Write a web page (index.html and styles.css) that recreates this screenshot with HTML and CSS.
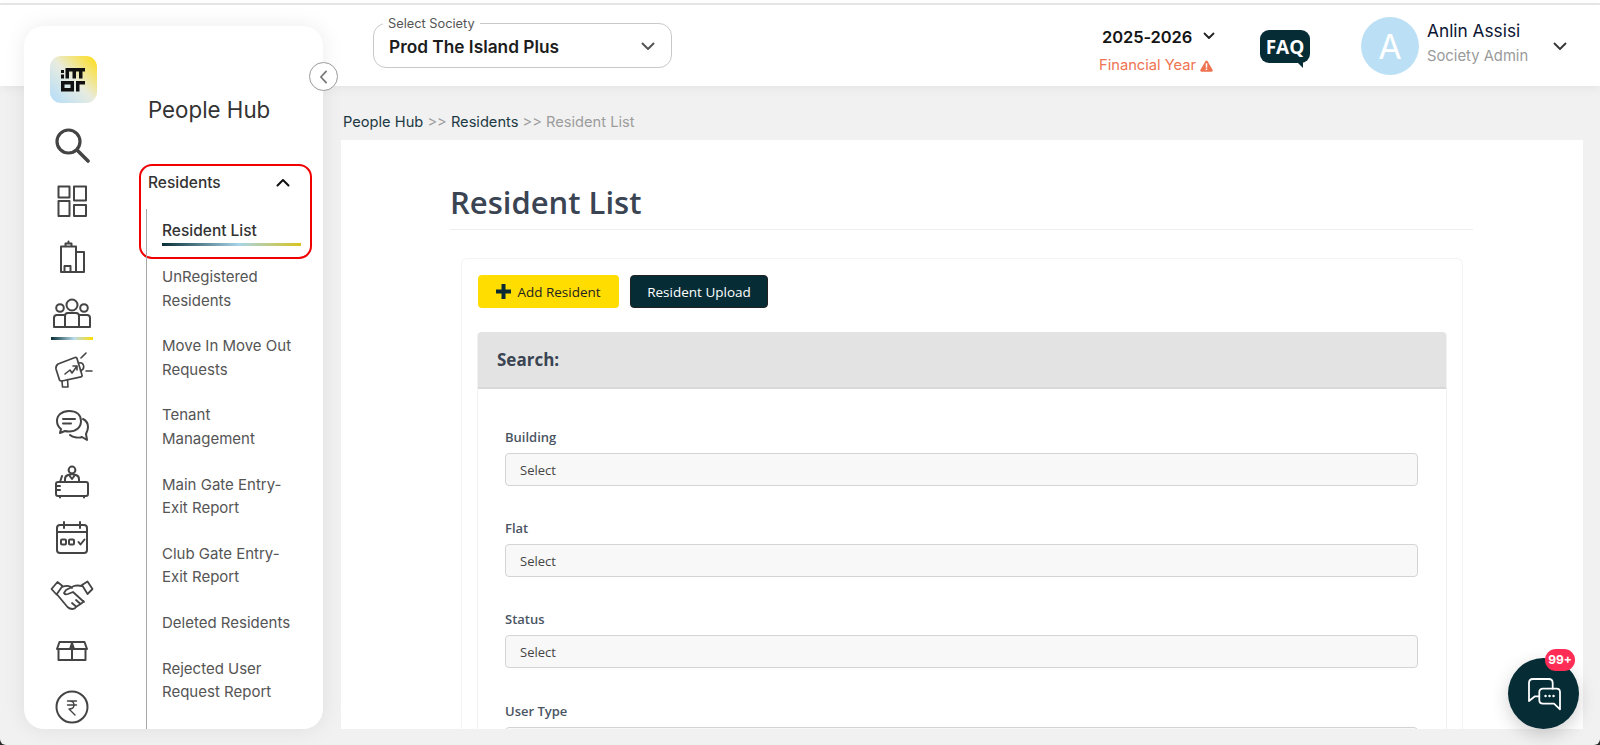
FILE: index.html
```html
<!DOCTYPE html>
<html>
	<head>
		<title>Resident List</title>
		<link rel="stylesheet" href="styles.css">
	</head>
	<body>
		<div class="page">
			<div class="top-strip"></div>
			<header class="topbar">
				<div class="society-select">
					<span class="society-label">Select Society</span>
					<span class="society-name">Prod The Island Plus</span>
					<svg class="society-chevron" viewBox="0 0 14 9"><path d="M1.5 1.5 7 7l5.500-5.500"/></svg>
				</div>
				<div class="year-block">
					<div class="year-row">
						<span class="year-value">2025-2026</span>
						<svg class="small-chevron" viewBox="0 0 12 8"><path d="M1.500 1.500 6 6l4.500-4.500"/></svg>
					</div>
					<div class="year-note">
						Financial Year
						<svg class="warn-icon" viewBox="0 0 14 13"><path d="M7 .6c.5 0 .9.3 1.200.7l5.400 9.300c.5.900-.1 2-1.200 2H1.600C.5 12.600-.1 11.500.4 10.600l5.400-9.300C6.100.9 6.500.6 7 .6z" fill="#ee7350"/><rect x="6.200" y="3.600" width="1.600" height="4.800" fill="#fff"/><rect x="6.200" y="9.300" width="1.600" height="1.600" fill="#fff"/></svg>
					</div>
				</div>
				<div class="faq-bubble">
					<span>FAQ</span>
				</div>
				<div class="user-block">
					<div class="avatar">A</div>
					<div class="user-text">
						<div class="user-name">Anlin Assisi</div>
						<div class="user-role">Society Admin</div>
					</div>
					<svg class="user-chevron" viewBox="0 0 14 9"><path d="M1.500 1.500 7 7l5.500-5.500"/></svg>
				</div>
			</header>

			<div class="content-area">
				<div class="breadcrumb">
					<span class="crumb">People Hub</span> <span class="crumb-sep">&gt;&gt;</span>
					<span class="crumb">Residents</span> <span class="crumb-sep">&gt;&gt;</span>
					<span class="crumb-current">Resident List</span>
				</div>
				<main class="main-card">
					<h1 class="page-title">Resident List</h1>
					<section class="panel">
						<div class="button-row">
							<button class="btn btn-yellow">
								<svg class="plus-icon" viewBox="0 0 15 15"><path d="M5.500 0h4v5.500H15v4H9.500V15h-4V9.500H0v-4h5.500z"/></svg>
								Add Resident
							</button>
							<button class="btn btn-dark">Resident Upload</button>
						</div>
						<div class="search-box">
							<div class="search-head">Search:</div>
							<div class="search-body">
								<div class="field">
									<label>Building</label>
									<div class="fake-select">Select</div>
								</div>
								<div class="field">
									<label>Flat</label>
									<div class="fake-select">Select</div>
								</div>
								<div class="field">
									<label>Status</label>
									<div class="fake-select">Select</div>
								</div>
								<div class="field">
									<label>User Type</label>
									<div class="fake-select"></div>
								</div>
							</div>
						</div>
					</section>
				</main>
			</div>
			<div class="page-foot"></div>

			<aside class="sidebar">
				<nav class="rail">
					<div class="logo">
						<svg viewBox="0 0 24 24" width="24" height="24" fill="#111">
							<rect x="0" y="2" width="3" height="3"/>
							<rect x="0" y="6.500" width="3" height="4"/>
							<path d="M4.500 0H24v3.500h-2.500V10.500h-3.500V3.500h-3v7h-3.500v-7h-3.500v7H4.500z"/>
							<path d="M0 13h13v10.500H0zM3.500 16.500v3.500h6v-3.500z" fill-rule="evenodd"/>
							<path d="M15 13h9v3.500h-5.500v7H15z"/>
						</svg>
					</div>
					<div class="rail-item">
						<svg viewBox="0 0 36 36" width="36" height="36"><circle cx="14.500" cy="14.500" r="11.500" stroke-width="3.200"/><path d="m23 23 11 11" stroke-width="3.600"/></svg>
					</div>
					<div class="rail-item">
						<svg viewBox="0 0 36 36" width="36" height="36"><rect x="4.500" y="3.500" width="11" height="11"/><rect x="20" y="3.500" width="12" height="14"/><rect x="4.500" y="18" width="11" height="15"/><rect x="20" y="22" width="12" height="11"/></svg>
					</div>
					<div class="rail-item">
						<svg viewBox="0 0 36 36" width="36" height="36"><path d="M7 33V7.500h15V33zM22 13h8v20h-8zM11.500 7.500V4.500h6v3M14.500 4.500V2.500M7 33h23M10.500 33v-6h6v6"/></svg>
					</div>
					<div class="rail-item rail-active">
						<svg viewBox="0 0 40 36" width="40" height="36"><circle cx="20" cy="9" r="5.500"/><circle cx="8" cy="12" r="3.800"/><circle cx="32" cy="12" r="3.800"/><path d="M13 31V20q0-3 3-3h8q3 0 3 3v11M2 31v-9q0-3 3-3h8M38 31v-9q0-3-3-3h-8M2 31h36"/></svg>
					</div>
					<div class="rail-item">
						<svg viewBox="0 0 42 36" width="42" height="36"><path d="M7 12 24 5.500q1.500-.5 2 1L31 23q.5 1.500-1 1.800L11 29q-1.500.3-2.500-1L5 17q-.5-3 2-5z" stroke-width="1.700"/><path d="M27.500 11q4-1 5 2.500t-3 5.500M11 29l.5 6h5.500l-.5-7.500M30 6l5-5M35 19h6M14 22l5-4 2 3 5-7M22 14h4v4" stroke-width="1.600"/></svg>
					</div>
					<div class="rail-item">
						<svg viewBox="0 0 36 36" width="36" height="36"><path d="M15 3C8 3 3 7 3 13c0 3 1.500 6 4 8l-1 4 5-2q2 .500 4 .500c7 0 12-4 12-10.500S22 3 15 3z"/><path d="M29 11c4 2 5 5 5 8s-1 5-2 7l1 6-5-3c-2 1-9 1-12-2M9 11h12M9 15.500h8"/></svg>
					</div>
					<div class="rail-item">
						<svg viewBox="0 0 36 36" width="36" height="36"><circle cx="18" cy="6" r="3.400"/><path d="M11 18v-3q0-3 3-4l4-1 4 1q3 1 3 4v3M15 11l3 4 3-4M6 18l2-6"/><rect x="2" y="18" width="32" height="14" rx="2"/><path d="M2 22h4M2 26h4M6 32v1.500M30 32v1.500"/></svg>
					</div>
					<div class="rail-item">
						<svg viewBox="0 0 36 36" width="36" height="36"><rect x="3" y="5" width="30" height="28" rx="3"/><path d="M3 12h30M10 2v6M26 2v6M24.500 22l2 2.500 4-5"/><rect x="7" y="19.500" width="5" height="5" rx="1"/><rect x="15" y="19.500" width="5" height="5" rx="1"/></svg>
					</div>
					<div class="rail-item">
						<svg viewBox="0 0 44 32" width="44" height="32"><path d="m1.500 10 6-7 5 4-6 8.500zM42.500 10l-5-7.500-5.500 3.500 5.500 9zM12 8q5-2 8-.5l2 1.500M32 7q-5-1-8 0l-8 4-2 3q1 2 4 1l5-2 11 10M7.500 16l10 12q2 2 5 2 2.500 0 3.500-2l6-4 1.500-2M22 24l4 3.500M26 21l4 3.500" stroke-width="1.800"/></svg>
					</div>
					<div class="rail-item">
						<svg viewBox="0 0 32 20" width="32" height="20"><path d="M3.500 1h25l2.500 7H1zM2.500 8v11h27V8M16 1v18"/><path d="m16 2 2 6h-4z" fill="#444"/></svg>
					</div>
					<div class="rail-item">
						<svg viewBox="0 0 36 36" width="36" height="36"><circle cx="18" cy="18" r="15.500"/><path d="M13.500 12h9M13.500 16h9M15.500 12q4.500 0 4.500 4t-5 4l6 6" stroke-width="1.400"/></svg>
					</div>
				</nav>
				<div class="menu">
					<div class="menu-title">People Hub</div>
					<div class="menu-open">
						<div class="menu-head">
							<span>Residents</span>
							<svg class="menu-chevron" viewBox="0 0 14 9"><path d="M1.5 7.500 7 2l5.500 5.500"/></svg>
						</div>
						<div class="menu-active">Resident List</div>
					</div>
					<ul class="submenu">
						<li>UnRegistered Residents</li>
						<li>Move In Move Out Requests</li>
						<li>Tenant Management</li>
						<li>Main Gate Entry-Exit Report</li>
						<li>Club Gate Entry-Exit Report</li>
						<li>Deleted Residents</li>
						<li>Rejected User Request Report</li>
					</ul>
				</div>
			</aside>

			<div class="collapse-btn">
				<svg viewBox="0 0 10 16" width="9" height="14"><path d="M8 1.500 2 8l6 6.500"/></svg>
			</div>

			<div class="chat-fab">
				<svg viewBox="0 0 34 34" width="34" height="34"><path d="M25.700 11.700V6q0-4-4-4H6Q2 2 2 6v18l6-4.700h4.300"/><path d="M16 11.700h13.500q3.500 0 3.500 3.500v17.100l-6-5.600H16q-3.700 0-3.700-3.700v-7.600q0-3.700 3.700-3.700z"/><path d="M18.500 19h.1M22.500 19h.1M26.500 19h.1" stroke-width="2.400"/></svg>
				<span class="chat-badge">99+</span>
			</div>
		</div>
	</body>
</html>
```

FILE: styles.css
```css
html {
	background-color: #2b2b2b;
}

body {
	margin: 0;
	font-family: 'Inter', 'Liberation Sans', sans-serif;
}

.page {
	position: relative;
	height: 745px;
	overflow: hidden;
	background-color: #f1f1f1;
	border-radius: 0 0 6px 6px;
	display: flex;
	flex-direction: column;
}

.top-strip {
	height: 3px;
	background-color: #ffffff;
	border-bottom: 2px solid #e8e8e8;
}

.topbar {
	height: 81px;
	flex-shrink: 0;
	background-color: #ffffff;
	box-shadow: 0 2px 10px rgba(0, 0, 0, 0.06);
	display: flex;
	align-items: flex-start;
	padding-left: 373px;
	box-sizing: border-box;
	position: relative;
}

/* society dropdown */
.society-select {
	position: relative;
	width: 299px;
	height: 45px;
	margin-top: 18px;
	box-sizing: border-box;
	border: 1.500px solid #c9c9c9;
	border-radius: 13px;
	display: flex;
	align-items: center;
	justify-content: space-between;
	padding: 0 16px 0 15px;
}

.society-label {
	position: absolute;
	top: -8px;
	left: 9px;
	padding: 0 5px;
	background-color: #ffffff;
	font-size: 12.800px;
	line-height: 15px;
	color: #555555;
}

.society-name {
	font-size: 17.300px;
	font-weight: 600;
	color: #1c1c1c;
	margin-top: 1px;
}

.society-chevron, .small-chevron, .user-chevron, .menu-chevron {
	fill: none;
	stroke-linecap: round;
	stroke-linejoin: round;
}

.society-chevron {
	width: 14px;
	height: 9px;
	stroke: #555555;
	stroke-width: 2;
	margin-top: 2px;
}

/* financial year */
.year-block {
	margin-left: 427px;
	margin-top: 21px;
	width: 161px;
	flex-shrink: 0;
}

.year-row {
	display: flex;
	align-items: center;
	margin-left: 3px;
	height: 22px;
}

.year-value {
	font-size: 16.500px;
	font-weight: 600;
	letter-spacing: -0.100px;
	color: #141414;
}

.small-chevron {
	width: 12px;
	height: 8px;
	stroke: #222222;
	stroke-width: 1.800;
	margin-left: 11px;
	margin-top: -2px;
}

.year-note {
	margin-top: 9px;
	font-size: 14.700px;
	line-height: 17px;
	color: #ee7350;
	display: flex;
	align-items: center;
	gap: 4px;
}

.warn-icon {
	width: 13px;
	height: 12px;
}

/* faq */
.faq-bubble {
	position: relative;
	margin-top: 25px;
	width: 50px;
	height: 33px;
	background-color: #062d36;
	border-radius: 9px;
	color: #ffffff;
	font-family: 'Open Sans', 'Liberation Sans', sans-serif;
	font-weight: 700;
	font-size: 19px;
	display: flex;
	align-items: center;
	justify-content: center;
}

.faq-bubble::after {
	content: "";
	position: absolute;
	right: 7px;
	bottom: -5px;
	border-top: 6px solid #062d36;
	border-left: 6px solid transparent;
}

/* user */
.user-block {
	margin-left: 51px;
	margin-top: 12px;
	display: flex;
	align-items: flex-start;
}

.avatar {
	width: 58px;
	height: 58px;
	border-radius: 50%;
	background-color: #bbdff5;
	color: #ffffff;
	font-size: 34px;
	display: flex;
	align-items: center;
	justify-content: center;
	flex-shrink: 0;
}

.user-text {
	width: 122px;
	margin-left: 8px;
	padding-top: 4px;
}

.user-name {
	font-size: 17.300px;
	line-height: 20px;
	color: #0b1533;
}

.user-role {
	font-size: 14.800px;
	line-height: 20px;
	margin-top: 5px;
	color: #9a9a9a;
}

.user-chevron {
	width: 14px;
	height: 9px;
	stroke: #333333;
	stroke-width: 1.800;
	margin-top: 25px;
	margin-left: 4px;
}

/* main content */
.content-area {
	flex: 1;
	min-height: 0;
	padding: 0 17px 0 341px;
	display: flex;
	flex-direction: column;
	overflow: hidden;
}

.breadcrumb {
	height: 54px;
	flex-shrink: 0;
	box-sizing: border-box;
	padding: 27px 0 0 2px;
	font-size: 14.650px;
	line-height: 19px;
	color: #1d3a44;
	white-space: nowrap;
}

.crumb-sep {
	color: #9c9c9c;
}

.crumb-current {
	color: #9c9c9c;
}

.main-card {
	flex: 1;
	min-height: 0;
	background-color: #ffffff;
	padding: 39px 110px 0 109px;
	overflow: hidden;
	font-family: 'Open Sans', 'Liberation Sans', sans-serif;
}

.page-title {
	margin: 0;
	height: 50px;
	border-bottom: 1px solid #eeeeee;
	font-size: 31px;
	line-height: 46px;
	font-weight: 600;
	color: #3a4452;
}

.panel {
	margin: 28px 10px 0 11px;
	border: 1px solid #f3f3f3;
	border-bottom: none;
	border-radius: 6px 6px 0 0;
	padding: 16px 16px 0 16px;
}

.button-row {
	display: flex;
	gap: 11px;
}

.btn {
	height: 33px;
	border: none;
	border-radius: 4px;
	font-family: 'Open Sans', 'Liberation Sans', sans-serif;
	font-size: 13.500px;
	font-weight: 500;
	display: flex;
	align-items: center;
	justify-content: center;
}

.btn-yellow {
	width: 141px;
	background-color: #ffdd00;
	color: #222222;
	gap: 6px;
}

.plus-icon {
	width: 15px;
	height: 15px;
	fill: #0a2a33;
}

.btn-dark {
	width: 138px;
	background-color: #062d36;
	color: #ffffff;
	border: 1px solid #222222;
}

.search-box {
	margin: 24px -1px 0 -1px;
	border: 1px solid #f1f1f1;
	border-top: none;
	border-radius: 4px 4px 0 0;
}

.search-head {
	height: 57px;
	box-sizing: border-box;
	background-color: #e3e3e3;
	border-bottom: 2px solid #d8d8d8;
	border-radius: 4px 4px 0 0;
	padding: 0 0 0 19px;
	font-size: 17px;
	font-weight: 700;
	line-height: 56px;
	color: #3a4452;
}

.search-body {
	padding: 39px 28px 0 27px;
}

.field {
	height: 91.200px;
}

.field label {
	display: block;
	font-size: 13px;
	font-weight: 600;
	line-height: 18px;
	color: #4a5563;
}

.fake-select {
	margin-top: 7px;
	height: 33px;
	box-sizing: border-box;
	border: 1px solid #d4d4d4;
	border-radius: 4px;
	background-color: #f8f8f8;
	padding-left: 14px;
	font-size: 13px;
	line-height: 33px;
	color: #444444;
}

.page-foot {
	height: 16px;
	flex-shrink: 0;
}

/* sidebar lies over the header */
.sidebar {
	position: absolute;
	top: 26px;
	left: 24px;
	width: 299px;
	height: 703px;
	background-color: #ffffff;
	border-radius: 20px;
	box-shadow: 0 0 22px rgba(0, 0, 0, 0.08);
	display: flex;
	overflow: hidden;
}

.rail {
	width: 96px;
	flex-shrink: 0;
	padding-top: 30px;
	box-sizing: border-box;
	display: flex;
	flex-direction: column;
	align-items: center;
}

.logo {
	width: 47px;
	height: 47px;
	flex-shrink: 0;
	margin: 0 0 14px 2px;
	border-radius: 11px;
	background: linear-gradient(45deg, #b2dcfb 0%, #e8ecdf 50%, #ffdc10 100%);
	display: flex;
	align-items: center;
	justify-content: center;
}

.rail-item {
	position: relative;
	height: 56.200px;
	width: 100%;
	flex-shrink: 0;
	display: flex;
	align-items: center;
	justify-content: center;
}

.rail-item svg {
	fill: none;
	stroke: #444444;
	stroke-width: 2;
	stroke-linecap: round;
	stroke-linejoin: round;
}

.rail-active::after {
	content: "";
	position: absolute;
	left: 27px;
	right: 27px;
	bottom: 2px;
	height: 3px;
	background: linear-gradient(90deg, #062d36 0%, #b8dcee 55%, #ffdd00 100%);
}

.menu {
	flex: 1;
	min-width: 0;
	position: relative;
	padding: 69px 0 0 19px;
	box-sizing: border-box;
}

.menu-title {
	margin-left: 9px;
	font-size: 22.300px;
	line-height: 30px;
	color: #333333;
}

.menu-open {
	margin-top: 39px;
	width: 173px;
	height: 95px;
	box-sizing: border-box;
	border: 2px solid #f00000;
	border-radius: 13px;
	padding: 0 9px 0 7px;
	position: relative;
}

.menu-head {
	height: 32px;
	display: flex;
	align-items: center;
	justify-content: space-between;
	padding-right: 11px;
	font-size: 15.500px;
	font-weight: 500;
	color: #333333;
}

.menu-chevron {
	width: 14px;
	height: 9px;
	stroke: #111111;
	stroke-width: 2;
}

.menu-active {
	margin-left: 14px;
	margin-top: 22px;
	height: 26px;
	box-sizing: border-box;
	border-bottom: 3px solid;
	border-image: linear-gradient(90deg, #062d36 0%, #a8d4e8 55%, #d8c41a 100%) 1;
	font-size: 15.500px;
	font-weight: 500;
	line-height: 22px;
	color: #333333;
}

.submenu {
	list-style: none;
	margin: 6px 0 0 7px;
	padding: 0 26px 0 15px;
	border-left: 1px solid #a8a8a8;
	height: 470px;
	box-sizing: border-box;
	display: flex;
	flex-direction: column;
	gap: 22.200px;
}

.submenu li {
	font-size: 15px;
	line-height: 23.500px;
	color: #555555;
}

.menu-open::after {
	content: "";
	position: absolute;
	left: 5px;
	top: 43px;
	bottom: -8px;
	width: 1px;
	background-color: #a8a8a8;
}

.collapse-btn {
	position: absolute;
	top: 62px;
	left: 309px;
	width: 29px;
	height: 29px;
	box-sizing: border-box;
	border: 1px solid #9a9a9a;
	border-radius: 50%;
	background-color: #ffffff;
	display: flex;
	align-items: center;
	justify-content: center;
}

.collapse-btn svg {
	fill: none;
	stroke: #777777;
	stroke-width: 2;
	stroke-linecap: round;
	stroke-linejoin: round;
}

.chat-fab {
	position: absolute;
	top: 658px;
	left: 1508px;
	width: 71px;
	height: 71px;
	border-radius: 50%;
	background-color: #062d36;
	box-shadow: 0 6px 18px rgba(0, 0, 0, 0.18);
	display: flex;
	align-items: center;
	justify-content: center;
}

.chat-fab svg {
	fill: none;
	stroke: #ffffff;
	stroke-width: 1.800;
	stroke-linecap: round;
	stroke-linejoin: round;
}

.chat-badge {
	position: absolute;
	top: -9px;
	right: 4px;
	width: 30px;
	height: 22px;
	border-radius: 11px;
	background-color: #ff2d55;
	color: #ffffff;
	font-size: 12px;
	font-weight: 700;
	line-height: 22px;
	text-align: center;
}
```
